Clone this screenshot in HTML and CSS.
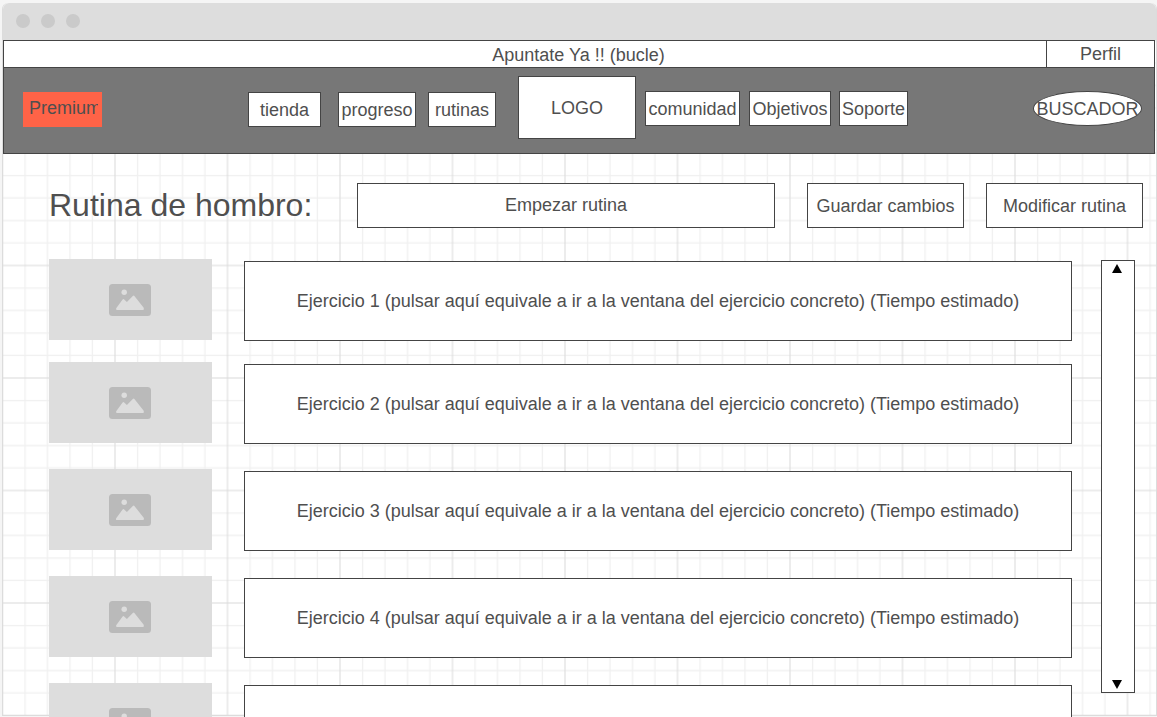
FILE: index.html
```html
<!DOCTYPE html>
<html lang="es">
<head>
<meta charset="utf-8">
<title>Rutina de hombro</title>
<link rel="stylesheet" href="styles.css">
</head>
<body>
<svg class="defs" aria-hidden="true">
  <symbol id="picture" viewBox="0 0 42 32">
    <rect class="picture-frame" width="42" height="32" rx="3.5"/>
    <circle class="picture-shape" cx="15.2" cy="8.2" r="2.7"/>
    <path class="picture-shape" d="M7.2 24.2 13.6 15.6Q14.4 14.6 15.2 15.6L17.9 18.1 23.8 12Q24.6 11.1 25.4 12L34.7 23.8Q35.5 26 34 26H8Q6.5 26 7.2 24.2Z"/>
  </symbol>
</svg>
<div class="window">
  <div class="titlebar"><span class="dot"></span><span class="dot"></span><span class="dot"></span></div>
  <div class="app">
    <svg class="grid" aria-hidden="true">
      <defs>
        <pattern id="cells" x="-0.5" y="0.5" width="112.5" height="112.5" patternUnits="userSpaceOnUse">
          <path class="minor" d="M22.5 0V112.5M45 0V112.5M67.5 0V112.5M90 0V112.5M0 22.5H112.5M0 45H112.5M0 67.5H112.5M0 90H112.5"/>
          <path class="major" d="M0 0H112.5M0 112.5H112.5M0 0V112.5M112.5 0V112.5"/>
        </pattern>
      </defs>
      <rect width="100%" height="100%" fill="url(#cells)"/>
    </svg>
    <div class="promo">
      <p class="promo-text">Apuntate Ya !! (bucle)</p>
      <a class="profile" href="#perfil">Perfil</a>
    </div>
    <header class="header">
      <button class="premium" type="button">Premium</button>
      <nav class="nav">
        <div class="nav-group">
          <a class="nav-link w-medium" href="#tienda">tienda</a>
          <a class="nav-link w-wide space-large" href="#progreso">progreso</a>
          <a class="nav-link w-small space-medium" href="#rutinas">rutinas</a>
        </div>
        <a class="logo" href="#inicio">LOGO</a>
        <div class="nav-group nav-group-right">
          <a class="nav-link w-widest" href="#comunidad">comunidad</a>
          <a class="nav-link w-wider space-small" href="#objetivos">Objetivos</a>
          <a class="nav-link w-regular space-tiny" href="#soporte">Soporte</a>
        </div>
      </nav>
      <input class="search" type="text" placeholder="BUSCADOR" aria-label="Buscador">
    </header>
    <main class="main">
      <div class="toolbar">
        <h1 class="title">Rutina de hombro:</h1>
        <button class="button button-start" type="button">Empezar rutina</button>
        <div class="actions">
          <button class="button" type="button">Guardar cambios</button>
          <button class="button" type="button">Modificar rutina</button>
        </div>
      </div>
      <div class="content">
        <ul class="list">
          <li class="row"><div class="thumb"><svg class="icon"><use href="#picture"/></svg></div><a class="exercise" href="#e1">Ejercicio 1 (pulsar aquí equivale a ir a la ventana del ejercicio concreto) (Tiempo estimado)</a></li>
          <li class="row row-second"><div class="thumb"><svg class="icon"><use href="#picture"/></svg></div><a class="exercise" href="#e2">Ejercicio 2 (pulsar aquí equivale a ir a la ventana del ejercicio concreto) (Tiempo estimado)</a></li>
          <li class="row"><div class="thumb"><svg class="icon"><use href="#picture"/></svg></div><a class="exercise" href="#e3">Ejercicio 3 (pulsar aquí equivale a ir a la ventana del ejercicio concreto) (Tiempo estimado)</a></li>
          <li class="row"><div class="thumb"><svg class="icon"><use href="#picture"/></svg></div><a class="exercise" href="#e4">Ejercicio 4 (pulsar aquí equivale a ir a la ventana del ejercicio concreto) (Tiempo estimado)</a></li>
          <li class="row"><div class="thumb"><svg class="icon"><use href="#picture"/></svg></div><a class="exercise" href="#e5">Ejercicio 5 (pulsar aquí equivale a ir a la ventana del ejercicio concreto) (Tiempo estimado)</a></li>
        </ul>
        <div class="scroller">
          <button class="arrow" type="button" aria-label="Subir"><svg width="10" height="9"><path d="M5 0 10 9H0Z"/></svg></button>
          <button class="arrow" type="button" aria-label="Bajar"><svg width="10" height="9"><path d="M0 0H10L5 9Z"/></svg></button>
        </div>
      </div>
    </main>
  </div>
</div>
</body>
</html>
```
FILE: styles.css
```css
* { box-sizing: border-box; }

body {
  margin: 0;
  height: 100vh;
  padding: 3px 0 1px 2px;
  overflow: hidden;
  background: #f5f5f5;
  color: #4f4f4f;
  font: 18px/20px "Liberation Sans", Arial, sans-serif;
}

a { color: inherit; text-decoration: none; }
button, input { font: inherit; color: inherit; margin: 0; border-radius: 0; }
.defs { position: absolute; width: 0; height: 0; }

.window {
  display: flex;
  flex-direction: column;
  height: 100%;
  border: 1px solid #dcdcdc;
  border-top: 0;
  border-radius: 6px 6px 0 0;
  background: #fff;
}

.titlebar {
  display: flex;
  align-items: center;
  gap: 11px;
  height: 37px;
  padding: 0 13px 2px;
  border-radius: 6px 6px 0 0;
  background: #ddd;
}
.dot { width: 14px; height: 14px; border-radius: 50%; background: #cacaca; }

.app {
  position: relative;
  flex: 1;
  min-height: 0;
  display: flex;
  flex-direction: column;
}
.grid { position: absolute; inset: 0; width: 100%; height: 100%; }
.minor { fill: none; stroke: #f0f0f0; stroke-width: 1.3; }
.major { fill: none; stroke: #dadada; stroke-width: 1; }

.promo {
  position: relative;
  display: flex;
  height: 28px;
  margin-right: 1px;
  border: 1px solid #444;
  background: #fff;
}
.promo-text { flex: 1; margin: 0; padding: 4px 0 0 107px; text-align: center; }
.profile {
  width: 108px;
  padding-top: 3px;
  border-left: 1px solid #444;
  text-align: center;
}

.header {
  position: relative;
  display: grid;
  grid-template-columns: 1fr auto 1fr;
  align-items: center;
  height: 86px;
  margin-right: 1px;
  padding: 0 12px 4px 10px;
  border: 1px solid #444;
  border-top: 0;
  background: #777;
}
.premium {
  width: 79px;
  height: 35px;
  margin-left: 9px;
  margin-top: 2px;
  padding: 0 4px 3px 6px;
  border: 0;
  background: #ff6347;
  text-align: left;
  overflow: clip;
  overflow-clip-margin: content-box;
}
.nav { display: flex; align-self: start; align-items: flex-start; padding-top: 8px; }
.nav-group { display: flex; padding-top: 16px; margin-right: 22px; }
.nav-group-right { padding-top: 15px; margin: 0 0 0 9px; }
.nav-link, .logo, .button, .exercise {
  display: flex;
  align-items: center;
  justify-content: center;
  border: 1px solid #444;
  background: #fff;
}
.nav-link { height: 35px; white-space: nowrap; }
.w-small { width: 68px; }
.w-regular { width: 69px; }
.w-medium { width: 73px; }
.w-wide { width: 78px; }
.w-wider { width: 82px; }
.w-widest { width: 95px; }
.space-tiny { margin-left: 8px; }
.space-small { margin-left: 9px; }
.space-medium { margin-left: 12px; }
.space-large { margin-left: 17px; }
.logo { width: 118px; height: 63px; }
.search {
  appearance: none;
  justify-self: end;
  width: 109px;
  height: 35px;
  padding: 2px 0 0;
  border: 1px solid #444;
  border-radius: 50%;
  background: #fff;
  text-align: center;
  outline: 0;
}
.search::placeholder { color: #4f4f4f; opacity: 1; }

.main {
  position: relative;
  flex: 1;
  min-height: 0;
  display: flex;
  flex-direction: column;
  padding: 29px 13px 22px 46px;
}
.toolbar { display: flex; align-items: center; gap: 32px; }
.title { width: 276px; margin: 0; padding-bottom: 2px; font-size: 32px; line-height: 42px; font-weight: 400; white-space: nowrap; }
.button { height: 45px; padding: 0; }
.button-start { flex: 1; padding-bottom: 2px; }
.actions { display: flex; gap: 22px; }
.actions .button { width: 157px; }

.content {
  flex: 1;
  min-height: 0;
  display: flex;
  gap: 29px;
  margin-top: 32px;
  padding-right: 8px;
}
.list { flex: 1; margin: 0; padding: 0; list-style: none; }
.row { display: flex; gap: 32px; margin-top: 26px; }
.row:first-child { margin-top: -1px; }
.row-second { margin-top: 22px; }
.thumb {
  display: flex;
  align-items: center;
  justify-content: center;
  width: 163px;
  height: 81px;
  padding-right: 1px;
  background: #ddd;
}
.icon { width: 42px; height: 32px; }
.picture-frame { fill: #bababa; }
.picture-shape { fill: #ddd; }
.exercise { flex: 1; height: 80px; margin-top: 2px; margin-bottom: -1px; }

.scroller {
  display: flex;
  flex-direction: column;
  justify-content: space-between;
  width: 34px;
  border: 1px solid #444;
  background: #fff;
}
.arrow {
  display: flex;
  justify-content: center;
  padding: 3px 2px 3px 0;
  border: 0;
  background: none;
}
```
